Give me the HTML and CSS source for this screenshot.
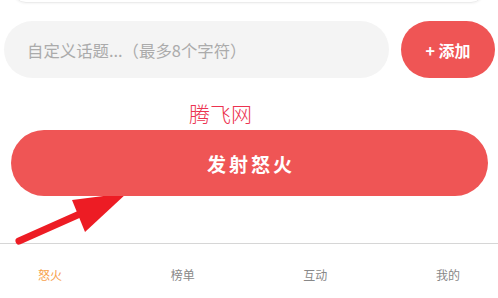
FILE: index.html
```html
<!DOCTYPE html>
<html lang="zh">
<head>
<meta charset="utf-8">
<link rel="stylesheet" href="styles.css">
</head>
<body>
<div class="page">
  <div class="card-edge"></div>
  <div class="topic-row">
    <div class="topic-input">自定义话题...（最多8个字符）</div>
    <div class="add-btn">+ 添加</div>
  </div>
  <div class="watermark">腾飞网</div>
  <div class="fire-btn">发射怒火</div>
  <svg class="arrow" width="498" height="298" viewBox="0 0 498 298">
    <line x1="19" y1="241" x2="82" y2="213" stroke="#ed1c24" stroke-width="7" stroke-linecap="round"/>
    <polygon points="127,193 72,200 85,232" fill="#ed1c24"/>
  </svg>
  <div class="tabbar">
    <span class="tab active">怒火</span>
    <span class="tab">榜单</span>
    <span class="tab">互动</span>
    <span class="tab">我的</span>
  </div>
</div>
</body>
</html>
```
FILE: styles.css
```css
* { box-sizing: border-box; }
html, body {
  margin: 0;
  padding: 0;
  background: #ffffff;
  font-family: "Noto Sans CJK SC", "Noto Sans", sans-serif;
}
.page {
  position: relative;
  width: 498px;
  height: 298px;
  overflow: hidden;
}
.card-edge {
  height: 40px;
  margin: -37px 13px 0 12px;
  border: 1px solid #ececec;
  border-radius: 14px;
  box-shadow: 0 1px 2px rgba(0,0,0,0.04);
}
.topic-row {
  display: flex;
  gap: 12px;
  margin: 18px 3px 0 4px;
  height: 57px;
}
.topic-input {
  flex: 1;
  background: #f4f4f4;
  border-radius: 29px;
  display: flex;
  align-items: center;
  padding-left: 23px;
  font-size: 16.4px;
  color: #ababab;
}
.add-btn {
  width: 94px;
  background: #ef5555;
  border-radius: 29px;
  display: flex;
  align-items: center;
  justify-content: center;
  color: #ffffff;
  font-size: 16px;
  font-weight: 700;
}
.watermark {
  margin-top: 23px;
  padding-left: 189px;
  height: 29px;
  font-size: 21px;
  line-height: 24px;
  font-weight: 300;
  color: #ec3350;
}
.fire-btn {
  position: relative;
  z-index: 1;
  margin: 0 10px 0 11px;
  height: 66px;
  background: #ef5555;
  border-radius: 33px;
  display: flex;
  align-items: center;
  justify-content: center;
  color: #ffffff;
  font-size: 19px;
  font-weight: 700;
  letter-spacing: 3px;
  padding-left: 3px;
}
.arrow {
  position: absolute;
  left: 0;
  top: 0;
}
.tabbar {
  margin-top: 47px;
  border-top: 1px solid #d6d6d6;
  height: 55px;
  display: flex;
  justify-content: space-between;
  padding: 22px 38px 0 38px;
  font-size: 12px;
  line-height: 17px;
  color: #888888;
}
.tab.active {
  color: #f7a24e;
}
```
